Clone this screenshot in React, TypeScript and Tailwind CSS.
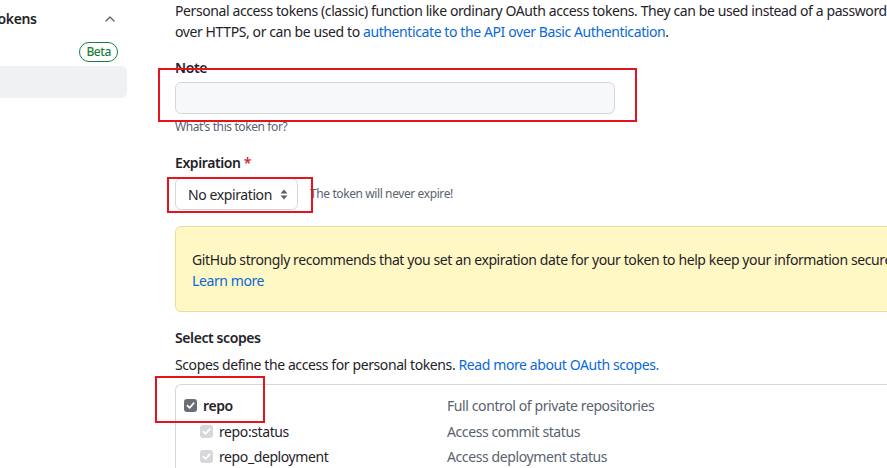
import { ChevronUp } from "lucide-react";

const CheckBox = ({ dark }: { dark?: boolean }) => (
  <span
    className={`flex h-[13px] w-[13px] items-center justify-center rounded-[3px] ${
      dark ? "bg-[#6b6f75]" : "bg-[#d6d8db]"
    }`}
  >
    <svg width="9" height="9" viewBox="0 0 10 10" fill="none">
      <path d="M1.5 5.2 4 7.6 8.6 2.4" stroke="white" strokeWidth="1.8" strokeLinecap="round" strokeLinejoin="round" />
    </svg>
  </span>
);

const scopes = [
  { name: "repo", desc: "Full control of private repositories", main: true },
  { name: "repo:status", desc: "Access commit status" },
  { name: "repo_deployment", desc: "Access deployment status" },
];

const App = () => {
  return (
    <div
      className="relative h-[468px] w-[887px] overflow-hidden bg-white text-[14px] text-[#1f2328]"
      style={{ fontFamily: '"Noto Sans", "Open Sans", sans-serif', letterSpacing: "-0.4px" }}
    >
      <div className="flex">
        {/* sidebar */}
        <div className="w-[127px] shrink-0 overflow-hidden">
          <div className="flex h-[37px] items-center justify-between pr-[9px]">
            <span className="-ml-[9px] font-semibold whitespace-nowrap">Tokens</span>
            <ChevronUp size={16} strokeWidth={2} className="text-[#59636e]" />
          </div>
          <div className="flex h-[29px] items-center justify-end pr-[9px]">
            <span className="rounded-full border border-[#1a7f37] px-[6px] text-[12px] leading-[18px] font-medium text-[#1a7f37]">
              Beta
            </span>
          </div>
          <div className="h-[32px] rounded-r-md bg-[#eff1f3]" />
        </div>

        {/* main */}
        <div className="ml-[48px] w-[900px] shrink-0">
          <p className="leading-[21px] whitespace-nowrap">
            Personal access tokens (classic) function like ordinary OAuth access tokens. They can be used instead of a password for Git
            <br />
            over HTTPS, or can be used to{" "}
            <span className="text-[#0969da]">authenticate to the API over Basic Authentication</span>.
          </p>

          <div className="mt-[15px] font-semibold leading-[21px]">Note</div>
          <div className="mt-[4px] h-[32px] w-[440px] rounded-md border border-[#d1d9e0] bg-[#f6f8fa]" />
          <div className="mt-[4px] text-[12px] leading-[18px] text-[#59636e]">What’s this token for?</div>

          <div className="mt-[16px] font-semibold leading-[21px]">
            Expiration <span className="text-[#d1242f]">*</span>
          </div>
          <div className="mt-[5px] flex items-center">
            <div className="flex h-[32px] w-[123px] items-center justify-between rounded-md border border-[#d1d9e0] pl-[12px] pr-[9px]">
              <span>No expiration</span>
              <svg width="8" height="11" viewBox="0 0 8 11" fill="#59636e">
                <path d="M4 0.5 7.5 4.5H0.5Z" />
                <path d="M4 10.5 0.5 6.5H7.5Z" />
              </svg>
            </div>
            <span className="ml-[12px] text-[12px] text-[#59636e]">The token will never expire!</span>
          </div>

          <div className="mt-[16px] rounded-md border border-[#eedb98] bg-[#fff8c5] px-[16px] pt-[22px] pb-[20px] leading-[21px]">
            <div className="whitespace-nowrap">
              GitHub strongly recommends that you set an expiration date for your token to help keep your information secure.
            </div>
            <div className="text-[#0969da]">Learn more</div>
          </div>

          <div className="mt-[15px] font-semibold leading-[21px]">Select scopes</div>
          <div className="mt-[6px] leading-[21px]">
            Scopes define the access for personal tokens.{" "}
            <span className="text-[#0969da]">Read more about OAuth scopes.</span>
          </div>

          <div className="mt-[9px] rounded-tl-md border-t border-l border-[#d1d9e0] pt-[8px] pl-[8px]">
            {scopes.map((s) => (
              <div key={s.name} className="flex h-[25.5px] items-center">
                <div className={`flex w-[263px] items-center ${s.main ? "" : "pl-[16px]"}`}>
                  <CheckBox dark={s.main} />
                  <span className={`ml-[6px] ${s.main ? "font-semibold" : ""}`}>{s.name}</span>
                </div>
                <span className="text-[#59636e]">{s.desc}</span>
              </div>
            ))}
          </div>
        </div>
      </div>

      {/* annotation boxes */}
      <div className="pointer-events-none absolute left-[158px] top-[68px] h-[54px] w-[479px] border-2 border-[#e5141c]" />
      <div className="pointer-events-none absolute left-[167px] top-[177px] h-[36px] w-[146px] border-2 border-[#e5141c]" />
      <div className="pointer-events-none absolute left-[155px] top-[376px] h-[47px] w-[110px] border-2 border-[#e5141c]" />
    </div>
  );
};

export default App;
